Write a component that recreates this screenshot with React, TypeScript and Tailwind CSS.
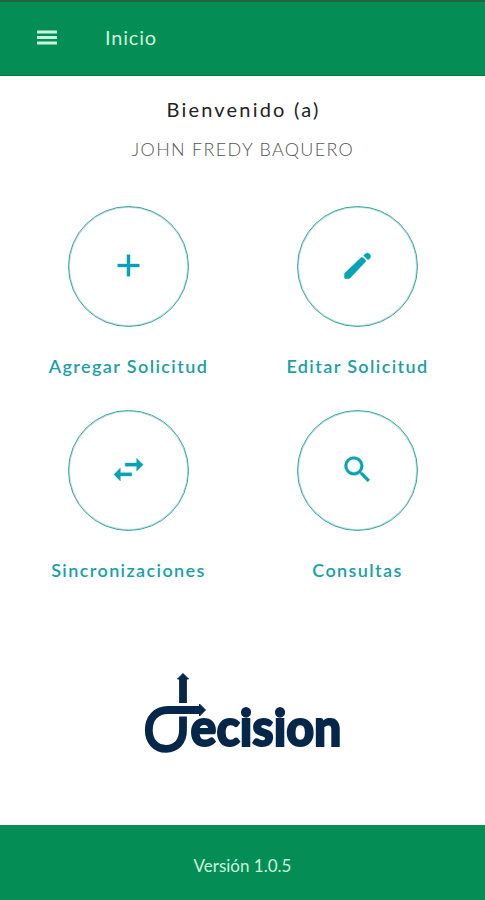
import type { ReactNode } from 'react';

type TileProps = { label: string; children: ReactNode };

function Tile({ label, children }: TileProps) {
  return (
    <button type="button" className="flex h-[204px] flex-col items-center text-[#1a9fa6]">
      <span className="flex h-[121px] w-[121px] items-center justify-center rounded-full border border-[#35a5a0] text-[#05a3b4] shadow-[inset_0_0_0_1px_rgba(53,165,160,0.35)]">
        {children}
      </span>
      <span className="mt-[27px] pl-px text-[18px] leading-6 font-semibold tracking-[1.4px] whitespace-nowrap">{label}</span>
    </button>
  );
}

function Icon({ d, size }: { d: string; size: number }) {
  return (
    <svg width={size} height={size} viewBox="0 0 24 24" fill="currentColor" stroke="currentColor" strokeWidth="0.2" strokeLinejoin="round" className="-translate-y-px">
      <path d={d} />
    </svg>
  );
}

function Logo() {
  return (
    <svg width="208" height="84" viewBox="0 0 208 84" className="overflow-visible text-[#06264a]" role="img" aria-label="decision">
      <g fill="none" stroke="currentColor" strokeWidth="7.8">
        <path d="M40 7V32" />
        <path d="M58 39H25C13 39 5.800 47.500 5.800 59S13 77.800 23 77.800S40 71 40 59V45.500" />
      </g>
      <path d="M34.500 8L40 2.500L45.500 8ZM56.500 33L62.500 39L56.500 45Z" fill="currentColor" stroke="currentColor" strokeWidth="1" />
      <text
        x="47.5"
        y="74.5"
        fontSize="52"
        fontWeight="900"
        textLength="151"
        lengthAdjust="spacingAndGlyphs"
        fill="currentColor"
        stroke="currentColor"
        strokeWidth="2"
        className="font-['Lato',sans-serif]"
      >
        ecision
      </text>
    </svg>
  );
}

export default function App() {
  return (
    <div className="flex h-[900px] w-[485px] flex-col bg-white font-['Lato',sans-serif]">
      <header className="flex h-[76px] items-center border-t-2 border-b border-t-[#21653f] border-b-[#087844] bg-[#048d54] pb-[4px] pl-[37px] text-[#c9f5dd]">
        <svg width="20" height="16" viewBox="0 0 20 16" fill="currentColor">
          <path d="M0 1.500h20v3H0zM0 7h20v3H0zM0 12.500h20v3H0z" />
        </svg>
        <h1 className="ml-[48px] text-[20px] leading-6 tracking-[0.8px]">Inicio</h1>
      </header>
      <main className="flex flex-1 flex-col items-center">
        <h2 className="mt-[21px] pl-[2px] text-[20px] leading-6 tracking-[2.2px] text-[#222]">Bienvenido (a)</h2>
        <p className="mt-[16px] pl-px text-[18px] leading-6 font-light tracking-[1.3px] text-[#555]">JOHN FREDY BAQUERO</p>
        <div className="mt-[45px] grid w-[458px] grid-cols-2">
          <Tile label="Agregar Solicitud">
            <Icon size={37} d="M19 13h-6v6h-2v-6H5v-2h6V5h2v6h6v2z" />
          </Tile>
          <Tile label="Editar Solicitud">
            <Icon size={35} d="M16.100 6.900l1.400 1.400Q18.100 8.900 17.500 9.500L7 20.500Q6.500 21 6 21H3.800Q3 21 3 20.200V18Q3 17.500 3.500 17L14.500 6.500Q15.300 6.100 16.100 6.900zM16.200 5.200L17.300 4.100Q18.800 2.700 20.300 4.100Q21.700 5.600 20.500 7.100L19.200 8.300z" />
          </Tile>
          <Tile label="Sincronizaciones">
            <Icon size={39} d="M6.990 11L3 15l3.990 4v-3H14v-2H6.990v-3zM21 9l-3.990-4v3H10v2h7.010v3L21 9z" />
          </Tile>
          <Tile label="Consultas">
            <Icon size={35} d="M15.500 14h-.79l-.28-.27A6.471 6.471 0 0 0 16 9.500 6.500 6.500 0 1 0 9.500 16c1.610 0 3.090-.59 4.230-1.570l.27.28v.79l5 4.990L20.490 19l-4.990-5zm-6 0C7.010 14 5 11.990 5 9.500S7.010 5 9.500 5 14 7.010 14 9.500 11.990 14 9.500 14z" />
          </Tile>
        </div>
        <div className="mt-[57px] ml-[8px]">
          <Logo />
        </div>
      </main>
      <footer className="flex h-[75px] items-center justify-center bg-[#048d54] pt-[6px] text-[17px] leading-6 text-[#c9f5dd]">
        Versión 1.0.5
      </footer>
    </div>
  );
}
